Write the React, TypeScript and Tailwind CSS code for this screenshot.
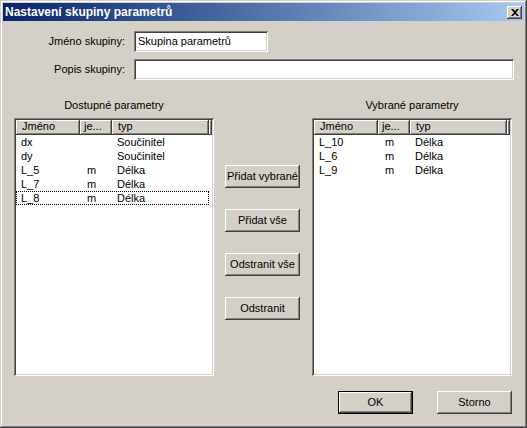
const raised =
  'shadow-[inset_-1px_-1px_0_#404040,inset_1px_1px_0_#ffffff,inset_-2px_-2px_0_#808080,inset_2px_2px_0_#d4d0c8]';
const sunken =
  'shadow-[inset_1px_1px_0_#808080,inset_-1px_-1px_0_#ffffff,inset_2px_2px_0_#404040,inset_-2px_-2px_0_#d4d0c8]';

type Row = { name: string; unit: string; type: string; focused?: boolean };

const available: Row[] = [
  { name: 'dx', unit: '', type: 'Součinitel' },
  { name: 'dy', unit: '', type: 'Součinitel' },
  { name: 'L_5', unit: 'm', type: 'Délka' },
  { name: 'L_7', unit: 'm', type: 'Délka' },
  { name: 'L_8', unit: 'm', type: 'Délka', focused: true },
];

const selected: Row[] = [
  { name: 'L_10', unit: 'm', type: 'Délka' },
  { name: 'L_6', unit: 'm', type: 'Délka' },
  { name: 'L_9', unit: 'm', type: 'Délka' },
];

function ListView({ title, rows }: { title: string; rows: Row[] }) {
  return (
    <div className="flex flex-col w-[200px]">
      <div className="h-[14px] leading-[14px] text-center">{title}</div>
      <div className={`mt-[6px] h-[258px] bg-white p-[2px] ${sunken}`}>
        {/* header */}
        <div className="flex h-[15px] bg-[#d4d0c8] leading-[13px]">
          <div className={`w-[64px] pl-[6px] ${raised}`}>Jméno</div>
          <div className={`w-[32px] pl-[4px] ${raised}`}>je...</div>
          <div className={`w-[97px] pl-[6px] ${raised}`}>typ</div>
          <div className={`flex-1 ${raised}`} />
        </div>
        {rows.map((r) => (
          <div
            key={r.name}
            className={`flex w-[193px] h-[14px] leading-[12px] border border-dotted ${
              r.focused ? 'border-black' : 'border-transparent'
            }`}
          >
            <div className="w-[63px] pl-[4px]">{r.name}</div>
            <div className="w-[32px] pl-[7px]">{r.unit}</div>
            <div className="flex-1 pl-[5px]">{r.type}</div>
          </div>
        ))}
      </div>
    </div>
  );
}

function Button({ label, isDefault }: { label: string; isDefault?: boolean }) {
  if (isDefault) {
    return (
      <div className="w-[75px] h-[23px] border border-black bg-[#d4d0c8]">
        <div className="h-full flex items-center justify-center shadow-[inset_-1px_-1px_0_#404040,inset_1px_1px_0_#ffffff,inset_-2px_-2px_0_#808080]">
          {label}
        </div>
      </div>
    );
  }
  return (
    <div className={`w-[75px] h-[23px] flex items-center justify-center bg-[#d4d0c8] ${raised}`}>
      {label}
    </div>
  );
}

export default function App() {
  return (
    <div
      className={`w-[527px] h-[428px] p-[3px] flex flex-col bg-[#d4d0c8] text-[11px] text-black font-['Liberation_Sans',Arial,sans-serif] shadow-[inset_-1px_-1px_0_#404040,inset_1px_1px_0_#d4d0c8,inset_-2px_-2px_0_#808080,inset_2px_2px_0_#ffffff]`}
    >
      {/* title bar */}
      <div className="h-[18px] flex items-center justify-between bg-linear-to-r from-[#0a246a] to-[#a6caf0] pl-[2px] pr-[2px]">
        <span className="text-white font-bold text-[12px]">Nastavení skupiny parametrů</span>
        <div className={`w-[15px] h-[13px] flex items-center justify-center bg-[#d4d0c8] ${raised}`}>
          <svg width="8" height="7" viewBox="0 0 8 7">
            <path d="M0 0h2l2 2 2-2h2L5 3.5 8 7H6L4 5 2 7H0l3-3.5z" fill="#000" />
          </svg>
        </div>
      </div>

      {/* name row */}
      <div className="mt-[10px] flex items-center h-[21px]">
        <div className="w-[122px] text-right">Jméno skupiny:</div>
        <div className={`ml-[9px] w-[134px] h-[21px] bg-white pl-[4px] leading-[21px] ${sunken}`}>
          Skupina parametrů
        </div>
      </div>

      {/* description row */}
      <div className="mt-[7px] flex items-center h-[21px]">
        <div className="w-[122px] text-right">Popis skupiny:</div>
        <div className={`ml-[9px] w-[380px] h-[21px] bg-white ${sunken}`} />
      </div>

      {/* lists */}
      <div className="mt-[18px] flex pl-[11px]">
        <ListView title="Dostupné parametry" rows={available} />
        <div className="ml-[11px] pt-[67px] flex flex-col gap-[21px]">
          <Button label="Přidat vybrané" />
          <Button label="Přidat vše" />
          <Button label="Odstranit vše" />
          <Button label="Odstranit" />
        </div>
        <div className="ml-[12px]">
          <ListView title="Vybrané parametry" rows={selected} />
        </div>
      </div>

      {/* footer */}
      <div className="mt-[15px] flex justify-end gap-[24px] pr-[12px]">
        <Button label="OK" isDefault />
        <Button label="Storno" />
      </div>
    </div>
  );
}
